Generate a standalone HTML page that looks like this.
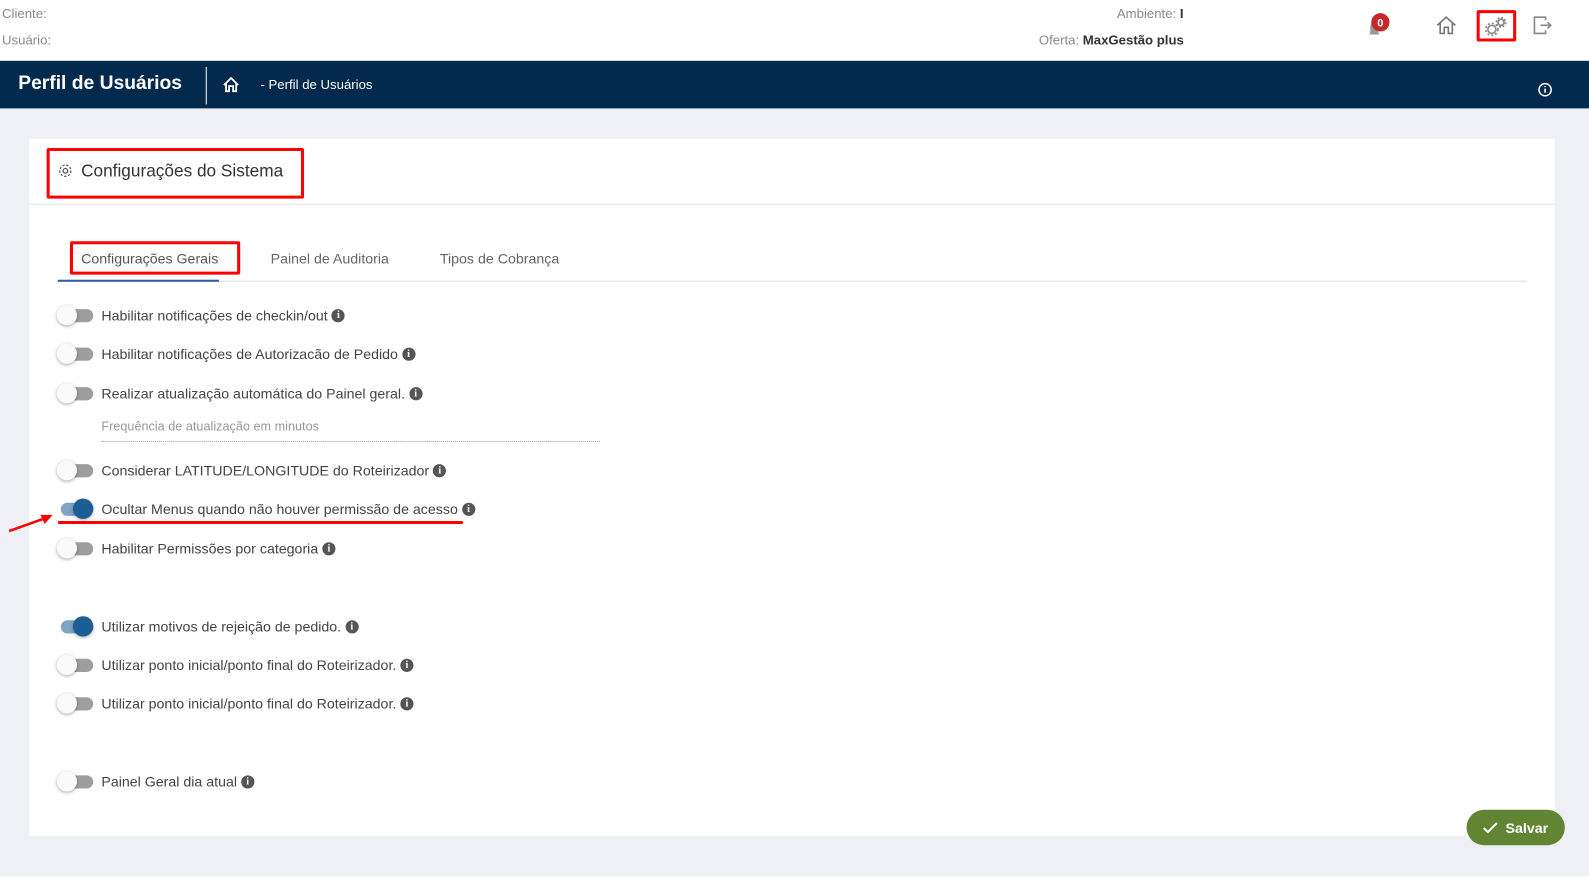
<!DOCTYPE html>
<html><head><meta charset="utf-8"><style>
*{box-sizing:border-box;margin:0;padding:0}
html,body{width:1589px;height:889px;overflow:hidden;background:#fff;font-family:"Liberation Sans",sans-serif}
#w{position:absolute;left:0;top:0;width:1568px;height:878px;transform:scale(1.0135);transform-origin:0 0}
.a{position:absolute}
.top{color:#8a8a8a;font-size:13px}
.nav{top:60px;left:0;width:1568px;height:47px;background:#032a4d}
.bg{top:107px;left:0;width:1568px;height:758px;background:#eff0f5}
.card{top:137px;left:29px;width:1505px;height:688px;background:#fff}
.red{border:3px solid #f00;border-radius:2px}
.row{left:56px;height:20px;display:flex;align-items:center;font-size:14px;color:#444}
.tg{width:36px;height:20px;position:relative;margin-right:8px}
.tg .tr{position:absolute;left:4px;top:4px;width:32px;height:13px;border-radius:7px;background:#9e9e9e}
.tg .k{position:absolute;left:0;top:0;width:20px;height:20px;border-radius:50%;background:#fafafa;box-shadow:0 1px 3px rgba(0,0,0,.35)}
.tg.on .tr{background:#7ea3c4}
.tg.on .k{left:16px;background:#1b5e96}
.i{display:inline-block;width:13px;height:13px;border-radius:50%;background:#555;color:#fff;font-size:10px;font-weight:bold;text-align:center;line-height:13px;margin-left:4px;font-family:"Liberation Serif",serif}
</style></head><body><div id="w">
<div class="a top" style="left:2px;top:6px">Cliente:</div>
<div class="a top" style="left:2px;top:32px">Usuário:</div>
<div class="a top" style="left:1102px;top:6px">Ambiente: <b style="color:#333">I</b></div>
<div class="a top" style="left:1025px;top:32px">Oferta: <b style="color:#333">MaxGestão plus</b></div>
<svg class="a" style="left:1346px;top:12px" width="30" height="26"><path d="M5 22h10l-1-2v-6a4 4 0 0 0-8 0v6l-1 2z" fill="#999"/><circle cx="16" cy="10" r="9" fill="#c62828"/><text x="16" y="14" font-size="11" font-weight="bold" fill="#fff" text-anchor="middle" font-family="Liberation Sans">0</text></svg>
<svg class="a" style="left:1416px;top:14px" width="22" height="22" fill="none" stroke="#777" stroke-width="1.6"><path d="M2 11L11 3l9 8M5 9v10h4v-6h4v6h4V9"/></svg>
<div class="a red" style="left:1457px;top:10px;width:39px;height:31px"></div>
<svg class="a" style="left:1464px;top:15px" width="24" height="22" fill="none" stroke="#888" stroke-width="1.6"><circle cx="8" cy="14" r="4"/><circle cx="8" cy="14" r="6" stroke-dasharray="2 2"/><circle cx="17" cy="7" r="3"/><circle cx="17" cy="7" r="4.6" stroke-dasharray="2 1.6"/></svg>
<svg class="a" style="left:1512px;top:15px" width="20" height="20" fill="none" stroke="#888" stroke-width="1.6"><path d="M13 5V2H2v16h11v-3M8 10h10M15 7l3 3-3 3"/></svg>
<div class="a nav"></div>
<div class="a" style="left:18px;top:72px;color:#fff;font-size:19px;font-weight:bold">Perfil de Usuários</div>
<div class="a" style="left:203px;top:66px;width:1px;height:37px;background:#fff"></div>
<svg class="a" style="left:219px;top:75px" width="18" height="17" fill="none" stroke="#fff" stroke-width="1.8"><path d="M2 9l7-7 7 7M4 7v8h3v-5h4v5h3V7"/></svg>
<div class="a" style="left:257px;top:76px;color:#fff;font-size:13px">- Perfil de Usuários</div>
<svg class="a" style="left:1517px;top:81px" width="15" height="15"><circle cx="7.5" cy="7.5" r="6" fill="none" stroke="#fff" stroke-width="1.5"/><path d="M7.5 6.5v4M7.5 4v1" stroke="#fff" stroke-width="1.6"/></svg>
<div class="a bg"></div>
<div class="a card"></div>
<div class="a" style="left:29px;top:201px;width:1505px;height:1px;background:#e4e4e4"></div>
<div class="a red" style="left:46px;top:146px;width:254px;height:50px"></div>
<svg class="a" style="left:57px;top:161px" width="15" height="15" fill="none" stroke="#555" stroke-width="1.2"><circle cx="7.5" cy="7.5" r="2.3"/><circle cx="7.5" cy="7.5" r="5.5" stroke-dasharray="2.2 1.6"/></svg>
<div class="a" style="left:80px;top:159px;font-size:17px;color:#333">Configurações do Sistema</div>
<div class="a" style="left:57px;top:277px;width:1449px;height:1px;background:#ddd"></div>
<div class="a" style="left:57px;top:276px;width:159px;height:2px;background:#3157a5"></div>
<div class="a red" style="left:69px;top:238px;width:168px;height:33px"></div>
<div class="a" style="left:80px;top:247px;font-size:14px;color:#555">Configurações Gerais</div>
<div class="a" style="left:267px;top:247px;font-size:14px;color:#666">Painel de Auditoria</div>
<div class="a" style="left:434px;top:247px;font-size:14px;color:#666">Tipos de Cobrança</div>
<div class="a row" style="top:301px"><div class="tg"><div class="tr"></div><div class="k"></div></div>Habilitar notificações de checkin/out<span class="i">i</span></div>
<div class="a row" style="top:339px"><div class="tg"><div class="tr"></div><div class="k"></div></div>Habilitar notificações de Autorizacão de Pedido<span class="i">i</span></div>
<div class="a row" style="top:378px"><div class="tg"><div class="tr"></div><div class="k"></div></div>Realizar atualização automática do Painel geral.<span class="i">i</span></div>
<div class="a" style="left:100px;top:414px;font-size:12.5px;color:#999">Frequência de atualização em minutos</div>
<div class="a" style="left:100px;top:435px;width:492px;border-top:1px dotted #999"></div>
<div class="a row" style="top:454px"><div class="tg"><div class="tr"></div><div class="k"></div></div>Considerar LATITUDE/LONGITUDE do Roteirizador<span class="i">i</span></div>
<div class="a row" style="top:492px"><div class="tg on"><div class="tr"></div><div class="k"></div></div>Ocultar Menus quando não houver permissão de acesso<span class="i">i</span></div>
<div class="a" style="left:57px;top:514px;width:400px;height:3px;background:#f00;border-radius:2px"></div>
<svg class="a" style="left:6px;top:503px" width="48" height="24"><path d="M3 21L42 7" stroke="#f00" stroke-width="2.5"/><path d="M46 5l-12 0 4 9z" fill="#f00"/></svg>
<div class="a row" style="top:531px"><div class="tg"><div class="tr"></div><div class="k"></div></div>Habilitar Permissões por categoria<span class="i">i</span></div>
<div class="a row" style="top:608px"><div class="tg on"><div class="tr"></div><div class="k"></div></div>Utilizar motivos de rejeição de pedido.<span class="i">i</span></div>
<div class="a row" style="top:646px"><div class="tg"><div class="tr"></div><div class="k"></div></div>Utilizar ponto inicial/ponto final do Roteirizador.<span class="i">i</span></div>
<div class="a row" style="top:684px"><div class="tg"><div class="tr"></div><div class="k"></div></div>Utilizar ponto inicial/ponto final do Roteirizador.<span class="i">i</span></div>
<div class="a row" style="top:761px"><div class="tg"><div class="tr"></div><div class="k"></div></div>Painel Geral dia atual<span class="i">i</span></div>
<div class="a" style="left:1447px;top:799px;width:97px;height:35px;border-radius:18px;background:#628534;color:#fff;font-size:14px;font-weight:bold;display:flex;align-items:center;justify-content:center"><svg width="16" height="12" style="margin-right:6px" fill="none" stroke="#fff" stroke-width="2"><path d="M1 6l4 4 9-9"/></svg>Salvar</div>
</div></body></html>
